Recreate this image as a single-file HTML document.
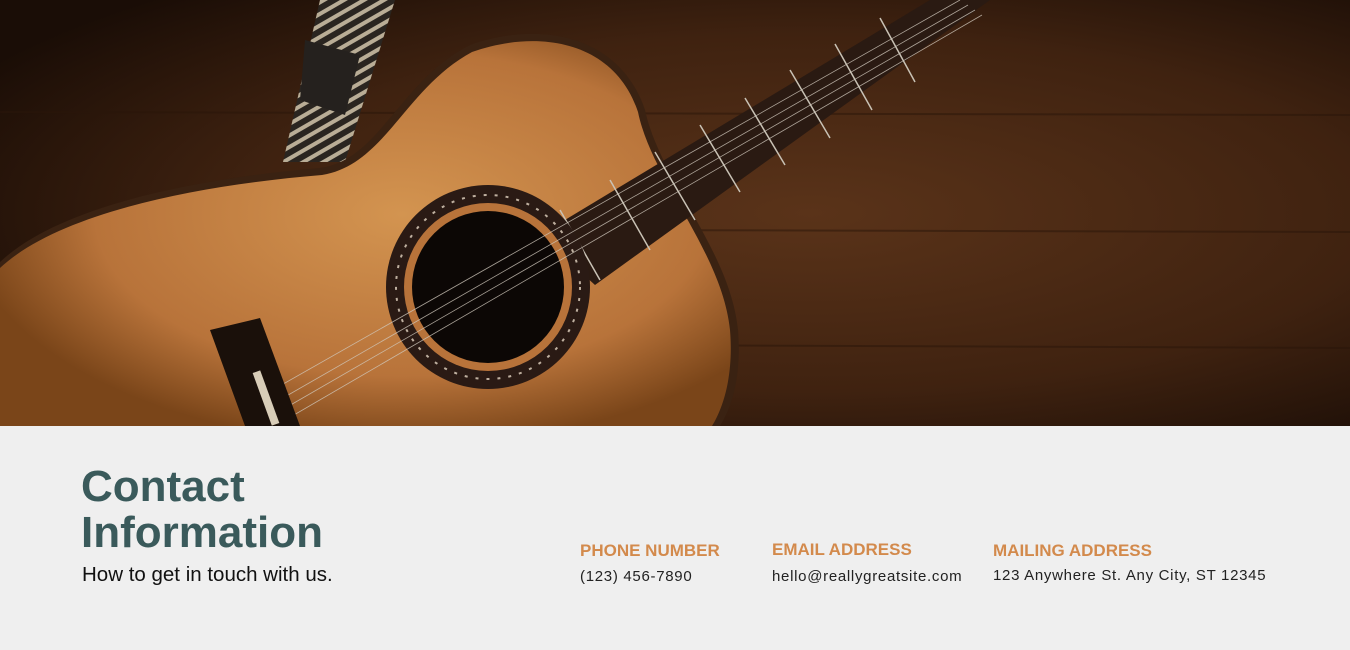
<!DOCTYPE html>
<html><head><meta charset="utf-8"><style>
*{margin:0;padding:0}
body{width:1350px;height:650px;background:#efefef;position:relative;overflow:hidden;font-family:"Liberation Sans",sans-serif}
.t{position:absolute;white-space:nowrap}
.h{color:#3a5a5b;font-weight:bold;font-size:44px;line-height:46px;left:81px}
.l{color:#d38a4c;font-weight:bold;font-size:17px}
.v{color:#222;font-size:15px;letter-spacing:0.7px}
</style></head><body>
<svg width="1350" height="426" style="position:absolute;left:0;top:0" viewBox="0 0 1350 426">
<defs>
<radialGradient id="bg" cx="0.6" cy="0.5" r="0.7">
<stop offset="0" stop-color="#5a3319"/><stop offset="0.6" stop-color="#3f2210"/><stop offset="1" stop-color="#1a0d06"/>
</radialGradient>
<radialGradient id="body" cx="0.55" cy="0.45" r="0.6">
<stop offset="0" stop-color="#d39450"/><stop offset="0.7" stop-color="#b8733a"/><stop offset="1" stop-color="#7a4519"/>
</radialGradient>
<pattern id="st" width="10" height="10" patternUnits="userSpaceOnUse" patternTransform="rotate(-30)">
<rect width="10" height="10" fill="#2a2520"/><rect width="10" height="4" fill="#b9ad96"/>
</pattern>
</defs>
<rect width="1350" height="426" fill="url(#bg)"/>
<g stroke="#2a160a" stroke-width="2" opacity="0.5">
<line x1="0" y1="112" x2="1350" y2="115"/><line x1="600" y1="230" x2="1350" y2="232"/><line x1="600" y1="345" x2="1350" y2="348"/>
</g>
<path d="M283 162 L320 0 L395 0 L345 162Z" fill="url(#st)"/>
<path d="M305 40 L360 55 L345 115 L300 100Z" fill="#25211e"/>
<path d="M0 262 C60 205 200 178 320 168 C380 160 400 80 470 45 C540 20 620 35 645 110 C660 180 730 250 738 330 C742 380 730 410 720 426 L0 426Z" fill="#3a2212"/>
<path d="M0 268 C60 212 200 185 322 175 C385 165 405 88 472 52 C540 28 615 42 638 112 C652 180 722 252 730 330 C734 378 722 410 712 426 L0 426Z" fill="url(#body)"/>
<path d="M540 235 L930 0 L990 0 L595 285Z" fill="#2a1a12"/>
<g stroke="#c9c2b5" stroke-width="1.5">
<line x1="560" y1="210" x2="600" y2="280"/><line x1="610" y1="180" x2="650" y2="250"/><line x1="655" y1="152" x2="695" y2="220"/><line x1="700" y1="125" x2="740" y2="192"/><line x1="745" y1="98" x2="785" y2="165"/><line x1="790" y1="70" x2="830" y2="138"/><line x1="835" y1="44" x2="872" y2="110"/><line x1="880" y1="18" x2="915" y2="82"/>
</g>
<circle cx="488" cy="287" r="102" fill="#2a1a14"/>
<circle cx="488" cy="287" r="92" fill="none" stroke="#bfb0a0" stroke-width="2" stroke-dasharray="3 8"/>
<circle cx="488" cy="287" r="84" fill="#b8733a"/>
<circle cx="488" cy="287" r="76" fill="#0c0705"/>
<g stroke="#d0c8bc" stroke-width="0.8" opacity="0.8">
<line x1="255" y1="400" x2="960" y2="0"/><line x1="262" y1="410" x2="968" y2="5"/><line x1="268" y1="418" x2="975" y2="10"/><line x1="275" y1="426" x2="982" y2="15"/>
</g>
<path d="M210 330 L260 318 L300 426 L245 426Z" fill="#1a100a"/>
<rect x="262" y="370" width="8" height="56" fill="#d8cdb8" transform="rotate(-20 266 398)"/>
</svg>
<div class="t h" style="top:464px">Contact</div>
<div class="t h" style="top:510px">Information</div>
<div class="t" style="left:82px;top:563px;font-size:20.5px;color:#111">How to get in touch with us.</div>
<div class="t l" style="left:580px;top:541px">PHONE NUMBER</div>
<div class="t v" style="left:580px;top:568px">(123) 456-7890</div>
<div class="t l" style="left:772px;top:540px">EMAIL ADDRESS</div>
<div class="t v" style="left:772px;top:568px">hello@reallygreatsite.com</div>
<div class="t l" style="left:993px;top:541px">MAILING ADDRESS</div>
<div class="t v" style="left:993px;top:567px">123 Anywhere St. Any City, ST 12345</div>
</body></html>
